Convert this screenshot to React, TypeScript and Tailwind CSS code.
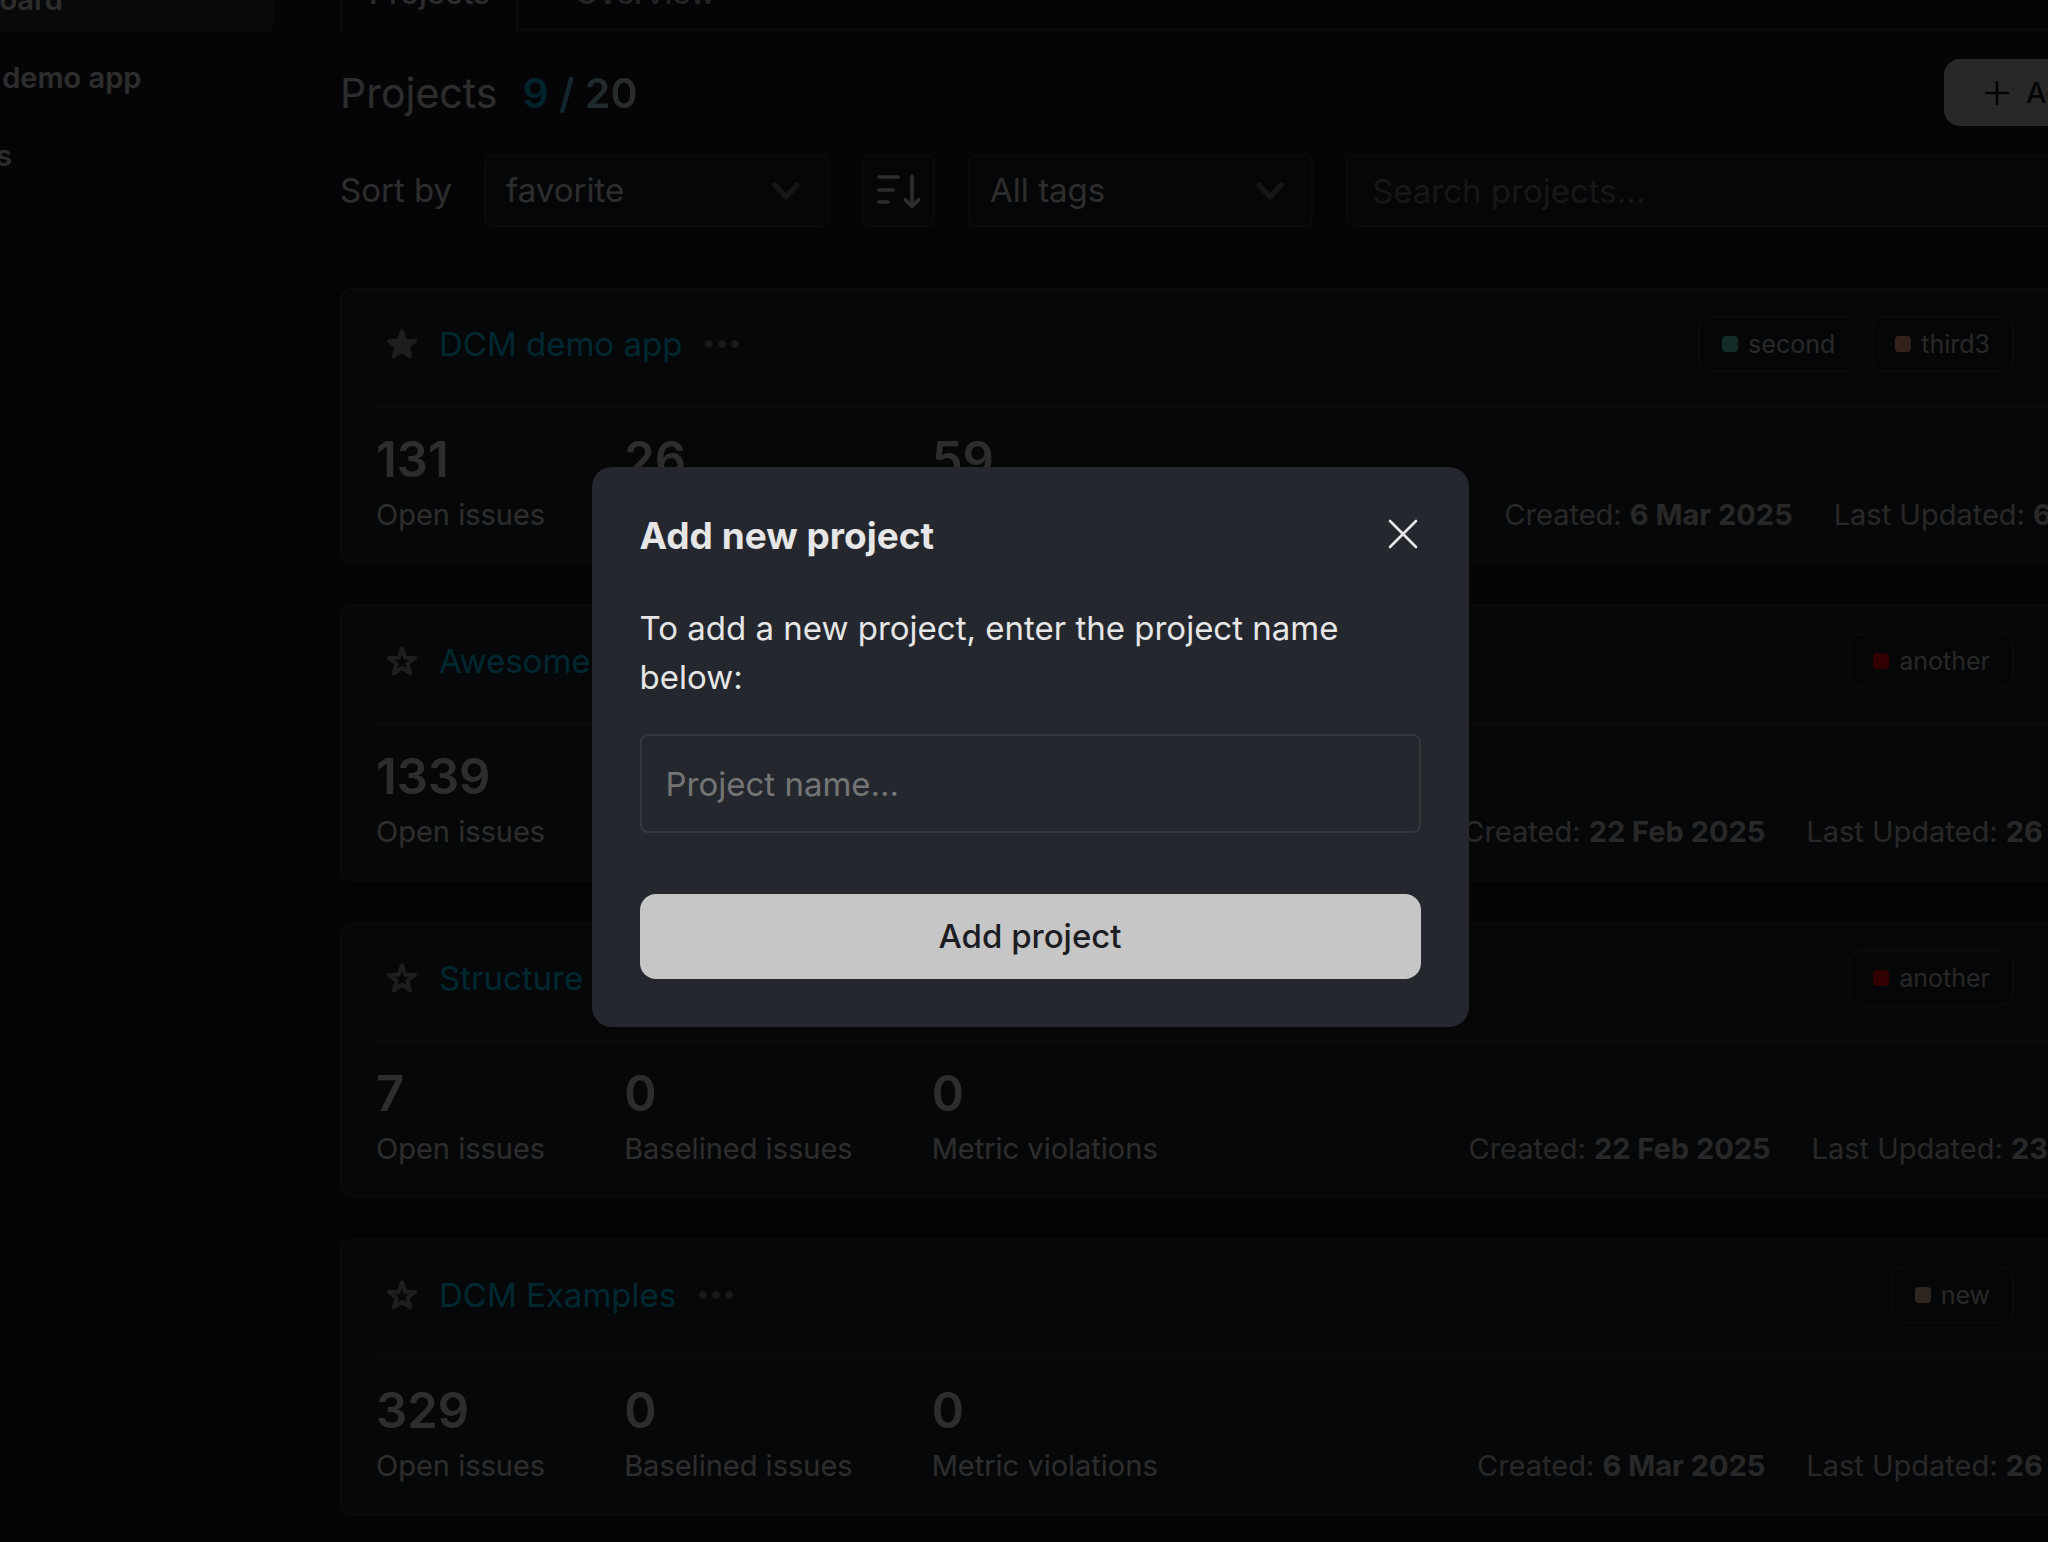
import { useState } from "react";

type Tag = { label: string; color: string };

type Project = {
  id: number;
  name: string;
  favorite: boolean;
  tags: Tag[];
  open: number;
  baselined: number;
  violations: number;
  created: string;
  updated: string;
};

const projects: Project[] = [
  {
    id: 1,
    name: "DCM demo app",
    favorite: true,
    tags: [
      { label: "second", color: "bg-[#64dcc8]" },
      { label: "third3", color: "bg-[#ffaa82]" },
    ],
    open: 131,
    baselined: 26,
    violations: 59,
    created: "6 Mar 2025",
    updated: "6 Apr 2025",
  },
  {
    id: 2,
    name: "Awesome",
    favorite: false,
    tags: [{ label: "another", color: "bg-[#ff0000]" }],
    open: 1339,
    baselined: 0,
    violations: 0,
    created: "22 Feb 2025",
    updated: "26 May 2025",
  },
  {
    id: 3,
    name: "Structure",
    favorite: false,
    tags: [{ label: "another", color: "bg-[#ff0000]" }],
    open: 7,
    baselined: 0,
    violations: 0,
    created: "22 Feb 2025",
    updated: "23 Mar 2025",
  },
  {
    id: 4,
    name: "DCM Examples",
    favorite: false,
    tags: [{ label: "new", color: "bg-[#e6be9b]" }],
    open: 329,
    baselined: 0,
    violations: 0,
    created: "6 Mar 2025",
    updated: "26 May 2025",
  },
];

function Chevron() {
  return (
    <svg
      viewBox="0 0 28 18"
      className="pointer-events-none absolute top-[28px] right-[29px] h-[18px] w-7 text-[#757575]"
      fill="none"
      stroke="currentColor"
      strokeWidth="5"
      strokeLinecap="round"
      strokeLinejoin="round"
    >
      <path d="M3 3l11 12L25 3" />
    </svg>
  );
}

function Star({ filled }: { filled: boolean }) {
  return (
    <svg
      viewBox="0 0 32 32"
      className="size-8"
      fill={filled ? "currentColor" : "none"}
      stroke="currentColor"
      strokeWidth="4"
      strokeLinejoin="round"
    >
      <path d="M16 3.5l3.3 9.2 9.7.2-7.7 6 2.8 9.4-8.1-5.6-8.1 5.6 2.8-9.4-7.7-6 9.7-.2z" />
    </svg>
  );
}

function Stat({ value, label }: { value: number; label: string }) {
  return (
    <div>
      <div className="text-[49px] leading-[50px] font-semibold">{value}</div>
      <div className="mt-3 text-[29px] leading-9">{label}</div>
    </div>
  );
}

function ProjectCard({ project }: { project: Project }) {
  return (
    <article className="rounded-xl border-2 border-[#323538] bg-[#1e262b] px-[34px]">
      <div className="flex items-center border-b-2 border-[#323538] pt-[26px] pb-[34px]">
        <button
          type="button"
          aria-label={`Favorite ${project.name}`}
          className="ml-[10px] text-[#969696]"
        >
          <Star filled={project.favorite} />
        </button>
        <a href="#" className="ml-[21px] text-[33px] leading-10 text-[#00c8f0]">
          {project.name}
        </a>
        <button
          type="button"
          aria-label={`${project.name} actions`}
          className="ml-[22px] text-[#828282]"
        >
          <svg viewBox="0 0 36 8" className="h-2 w-9" fill="currentColor">
            <circle cx="5" cy="4" r="3.8" />
            <circle cx="18" cy="4" r="3.8" />
            <circle cx="31" cy="4" r="3.8" />
          </svg>
        </button>
        <div className="mr-[178px] ml-auto flex gap-3">
          {project.tags.map((tag) => (
            <span
              key={tag.label}
              className="flex h-14 items-center gap-[10px] rounded-xl border-2 border-[#303336] bg-[#1a2025] px-[22px] text-[25px] leading-8 text-[#c8c8c8]"
            >
              <span className={`size-4 rounded-sm ${tag.color}`} />
              {tag.label}
            </span>
          ))}
        </div>
      </div>
      <div className="flex gap-[79px] pt-[27px] pb-[29px]">
        <Stat value={project.open} label="Open issues" />
        <Stat value={project.baselined} label="Baselined issues" />
        <Stat value={project.violations} label="Metric violations" />
        <div className="ml-auto flex gap-[41px] self-end text-[29px] leading-9 text-[#c8c8c8]">
          <span>
            Created: <b className="font-bold">{project.created}</b>
          </span>
          <span>
            Last Updated: <b className="font-bold">{project.updated}</b>
          </span>
        </div>
      </div>
    </article>
  );
}

function AddProjectDialog() {
  const [name, setName] = useState("");

  return (
    <div className="absolute inset-0 flex items-center justify-center bg-black/80 pb-12 pl-3">
      <div
        role="dialog"
        aria-modal="true"
        aria-labelledby="dialog-title"
        className="w-[877px] rounded-[20px] bg-[#25272f] px-12 pt-[46px] pb-12 text-[#e6e6e6]"
      >
        <div className="flex items-center justify-between">
          <h2 id="dialog-title" className="text-[37px] leading-[46px] font-bold">
            Add new project
          </h2>
          <button type="button" aria-label="Close">
            <svg
              viewBox="0 0 34 34"
              className="size-[34px]"
              fill="none"
              stroke="currentColor"
              strokeWidth="2.6"
              strokeLinecap="round"
            >
              <path d="M3 2l26 26M29 2L3 28" />
            </svg>
          </button>
        </div>
        <label htmlFor="project-name" className="mt-[45px] block text-[33px] leading-[49px]">
          To add a new project, enter the project name below:
        </label>
        <input
          id="project-name"
          type="text"
          value={name}
          onChange={(e) => setName(e.target.value)}
          placeholder="Project name..."
          className="mt-8 block h-[99px] w-full rounded-lg border-2 border-[#36373b] bg-transparent px-6 text-[33px] outline-none placeholder:text-[#757575]"
        />
        <button
          type="button"
          className="mt-[61px] h-[85px] w-full rounded-2xl bg-[#c6c6c6] text-[33px] font-medium text-[#1c1d22]"
        >
          Add project
        </button>
      </div>
    </div>
  );
}

export default function App() {
  const [search, setSearch] = useState("");

  return (
    <div className="relative h-screen w-full overflow-hidden bg-[#191923] font-['Inter',sans-serif] text-[#e1e1e1]">
      {/* the page is scrolled, so its edges run past the window */}
      <div className="-mt-[49px] -mr-[246px] -ml-40 flex">
        <nav className="flex w-[434px] shrink-0 flex-col gap-3 pt-4 text-[29px] font-semibold">
          <a href="#" className="flex h-[66px] items-center rounded-xl bg-[#232d34] pl-[70px]">
            Dashboard
          </a>
          <a href="#" className="flex h-[66px] items-center pl-[70px]">
            Music demo app
          </a>
          <a href="#" className="flex h-[66px] items-center pl-[70px]">
            Groups
          </a>
        </nav>

        <main className="min-w-0 flex-1 px-[66px]">
          <div role="tablist" className="flex h-20 text-[31px] font-medium">
            <button
              type="button"
              role="tab"
              aria-selected="true"
              className="border-x-3 border-[#353f46] px-[26px] pt-1"
            >
              Projects
            </button>
            <button
              type="button"
              role="tab"
              aria-selected="false"
              className="flex-1 border-b-3 border-[#353f46] pt-[7px] pl-14 text-left text-[#b4b4b4]"
            >
              Overview
            </button>
          </div>

          <div className="mt-7 flex items-center">
            <h1 className="text-[41px] leading-[50px]">Projects</h1>
            <span className="ml-[25px] bg-linear-to-r from-[#00b4dc] from-20% to-[#e1e1e1] bg-clip-text text-[41px] leading-[50px] font-semibold text-transparent">
              9 / 20
            </span>
            <button
              type="button"
              className="ml-auto flex h-[67px] items-center gap-[17px] rounded-2xl bg-[#c8c8c8] px-[41px] text-[29px] font-medium text-[#191923]"
            >
              <svg
                viewBox="0 0 24 24"
                className="size-6"
                fill="none"
                stroke="currentColor"
                strokeWidth="2.6"
                strokeLinecap="round"
              >
                <path d="M12 1v22M1 12h22" />
              </svg>
              Add project
            </button>
          </div>

          <div className="mt-7 flex items-center text-[33px]">
            <label htmlFor="sort">Sort by</label>
            <div className="relative ml-8">
              <select
                id="sort"
                className="h-[73px] w-[345px] appearance-none rounded-lg border-2 border-[#323538] bg-[#1a2026] px-5"
              >
                <option>favorite</option>
                <option>name</option>
              </select>
              <Chevron />
            </div>
            <button
              type="button"
              aria-label="Sort direction"
              className="ml-[33px] flex h-[73px] w-[73px] items-center justify-center rounded-lg border-2 border-[#323538] bg-[#1a2026]"
            >
              <svg
                viewBox="0 0 44 36"
                className="h-9 w-11"
                fill="none"
                stroke="currentColor"
                strokeWidth="3.6"
                strokeLinecap="round"
                strokeLinejoin="round"
              >
                <path d="M2 4h19M2 17h14M2 29h9M35 3v30M28.5 27l6.5 6.5L41.5 27" />
              </svg>
            </button>
            <div className="relative ml-[33px]">
              <select
                aria-label="Tags"
                className="h-[73px] w-[345px] appearance-none rounded-lg border-2 border-[#323538] bg-[#1a2026] px-5"
              >
                <option>All tags</option>
              </select>
              <Chevron />
            </div>
            <input
              type="search"
              aria-label="Search projects"
              value={search}
              onChange={(e) => setSearch(e.target.value)}
              placeholder="Search projects..."
              className="ml-[33px] h-[73px] min-w-0 flex-1 rounded-lg border-2 border-[#323538] bg-[#1a2026] px-6 placeholder:text-[#757575]"
            />
          </div>

          <div className="mt-[61px] flex flex-col gap-[41px]">
            {projects.map((project) => (
              <ProjectCard key={project.id} project={project} />
            ))}
          </div>
        </main>
      </div>

      <AddProjectDialog />
    </div>
  );
}
